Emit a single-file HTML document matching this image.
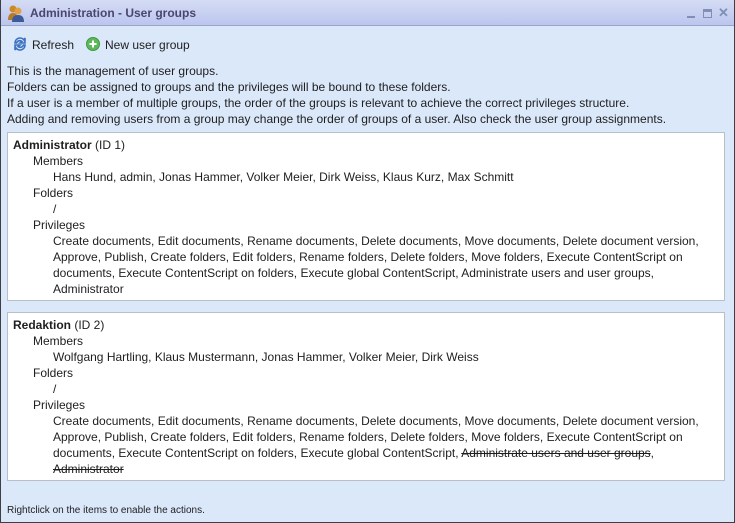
<!DOCTYPE html>
<html><head><meta charset="utf-8"><style>
*{margin:0;padding:0;box-sizing:border-box}
body{width:735px;height:523px;overflow:hidden;background:#fff;font-family:"Liberation Sans",sans-serif;font-size:12px;color:#1e1e1e}
.win{position:absolute;left:0;top:0;width:735px;height:523px;background:#dae8fa;border:1px solid #3c3f46;border-top:none}
.title{position:absolute;left:0;top:0;width:733px;height:26px;background:linear-gradient(#d4dcf4,#bcc6ee);border-bottom:1px solid #9aa4c8}
.title span{position:absolute;left:29px;top:6px;font-weight:bold;font-size:12px;color:#4a4670}
.l{position:absolute;white-space:nowrap;line-height:16px}
.box{position:absolute;left:6px;width:718px;background:#fff;border:1px solid #b9bfc8}
s{text-decoration:line-through}
</style></head><body>
<div class="win">
<div class="title">
<svg style="position:absolute;left:6px;top:4px" width="18" height="18" viewBox="0 0 18 18"><circle cx="6" cy="5" r="3.5" fill="#c98a2c"/><path d="M1 16c0-5 2-7 5-7s5 2 5 7z" fill="#b7792a"/><circle cx="11" cy="7" r="3.5" fill="#e0a043"/><path d="M5 18c0-5 2-7 6-7s6 2 6 7z" fill="#3b5a9a"/></svg>
<span>Administration - User groups</span>
<div style="position:absolute;left:686px;top:16px;width:8px;height:2px;background:#7f8fb8"></div>
<div style="position:absolute;left:702px;top:9px;width:9px;height:9px;border:1.5px solid #7f8fb8;border-top-width:3px"></div>
<div style="position:absolute;left:717px;top:5px;color:#7f8fb8;font-size:13px;font-weight:bold">✕</div>
</div>
<svg style="position:absolute;left:11px;top:36px" width="16" height="16" viewBox="0 0 16 16" fill="none" stroke="#3a70c0" stroke-width="1.6"><path d="M3 7a5 5 0 0 1 9-3l1-2v5H8l2-1.5A3.5 3.5 0 0 0 4.5 7z"/><path d="M13 9a5 5 0 0 1-9 3l-1 2V9h5l-2 1.5A3.5 3.5 0 0 0 11.5 9z"/></svg>
<div class="l" style="left:31px;top:37px">Refresh</div>
<svg style="position:absolute;left:85px;top:37px" width="14" height="14"><circle cx="7" cy="7" r="6.5" fill="#5cb85c" stroke="#3f9a3f"/><path d="M7 3.5v7M3.5 7h7" stroke="#fff" stroke-width="2"/></svg>
<div class="l" style="left:104px;top:37px">New user group</div>
<div class="l" style="left:6px;top:63px">This is the management of user groups.</div>
<div class="l" style="left:6px;top:79px">Folders can be assigned to groups and the privileges will be bound to these folders.</div>
<div class="l" style="left:6px;top:95px">If a user is a member of multiple groups, the order of the groups is relevant to achieve the correct privileges structure.</div>
<div class="l" style="left:6px;top:111px">Adding and removing users from a group may change the order of groups of a user. Also check the user group assignments.</div>
<div class="box" style="top:132px;height:169px">
<div class="l" style="left:5px;top:4px"><b>Administrator</b> (ID 1)</div>
<div class="l" style="left:25px;top:20px">Members</div>
<div class="l" style="left:45px;top:36px">Hans Hund, admin, Jonas Hammer, Volker Meier, Dirk Weiss, Klaus Kurz, Max Schmitt</div>
<div class="l" style="left:25px;top:52px">Folders</div>
<div class="l" style="left:45px;top:68px">/</div>
<div class="l" style="left:25px;top:84px">Privileges</div>
<div class="l" style="left:45px;top:100px">Create documents, Edit documents, Rename documents, Delete documents, Move documents, Delete document version,</div>
<div class="l" style="left:45px;top:116px">Approve, Publish, Create folders, Edit folders, Rename folders, Delete folders, Move folders, Execute ContentScript on</div>
<div class="l" style="left:45px;top:132px">documents, Execute ContentScript on folders, Execute global ContentScript, Administrate users and user groups,</div>
<div class="l" style="left:45px;top:148px">Administrator</div>
</div>
<div class="box" style="top:312px;height:169px">
<div class="l" style="left:5px;top:4px"><b>Redaktion</b> (ID 2)</div>
<div class="l" style="left:25px;top:20px">Members</div>
<div class="l" style="left:45px;top:36px">Wolfgang Hartling, Klaus Mustermann, Jonas Hammer, Volker Meier, Dirk Weiss</div>
<div class="l" style="left:25px;top:52px">Folders</div>
<div class="l" style="left:45px;top:68px">/</div>
<div class="l" style="left:25px;top:84px">Privileges</div>
<div class="l" style="left:45px;top:100px">Create documents, Edit documents, Rename documents, Delete documents, Move documents, Delete document version,</div>
<div class="l" style="left:45px;top:116px">Approve, Publish, Create folders, Edit folders, Rename folders, Delete folders, Move folders, Execute ContentScript on</div>
<div class="l" style="left:45px;top:132px">documents, Execute ContentScript on folders, Execute global ContentScript, <s>Administrate users and user groups</s>,</div>
<div class="l" style="left:45px;top:148px"><s>Administrator</s></div>
</div>
<div class="l" style="left:6px;top:503px;font-size:10px">Rightclick on the items to enable the actions.</div>
</div>
</body></html>
